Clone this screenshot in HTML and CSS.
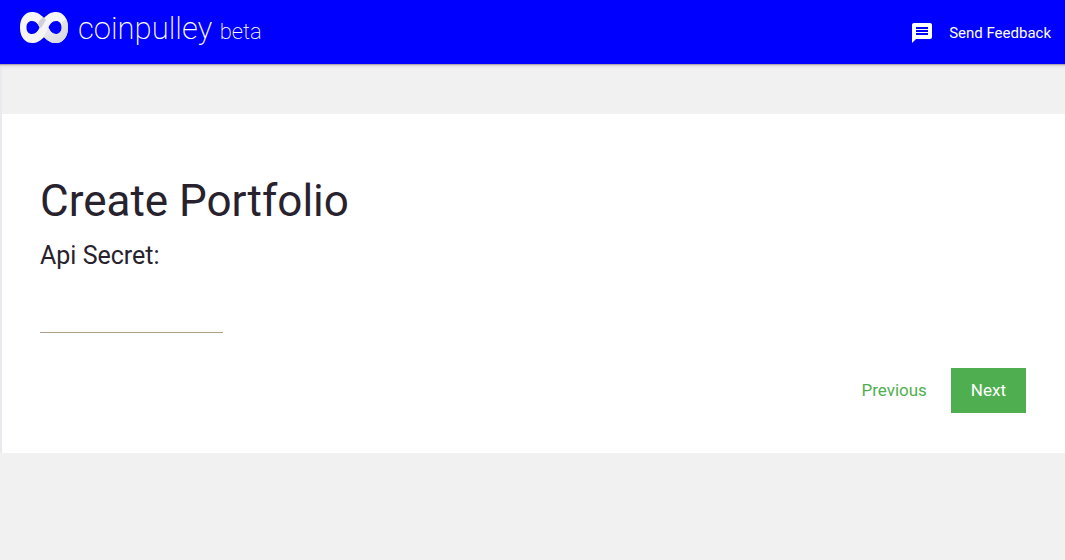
FILE: index.html
```html
<!DOCTYPE html>
<html lang="en">
<head>
<meta charset="utf-8">
<meta name="viewport" content="width=device-width, initial-scale=1">
<title>Create Portfolio - coinpulley</title>
<link rel="stylesheet" href="styles.css">
</head>
<body>
<header class="topbar">
  <a class="brand" href="#">
    <svg class="brand-mark" viewBox="0 0 48 32" aria-hidden="true">
      <defs>
        <clipPath id="loop">
          <path clip-rule="evenodd" d="M12 0C5 0 0 6 0 15.500C0 25 5 31 12 31C17 31 20 29 24 25C28 29 31 31 36 31C43 31 48 25 48 15.500C48 6 43 0 36 0C31 0 28 2 24 6C20 2 17 0 12 0ZM12 9C16 9 18 12 19.500 15.500C18 19 16 22 12 22C8.500 22 6.500 19.500 6.500 15.500C6.500 11.500 8.500 9 12 9ZM36 9C39.500 9 41.500 11.500 41.500 15.500C41.500 19.500 39.500 22 36 22C32 22 30 19 28.500 15.500C30 12 32 9 36 9Z"/>
        </clipPath>
        <linearGradient id="fade" x1="0" y1="0" x2="1" y2="1">
          <stop offset="0" stop-color="#f0f0f3"/>
          <stop offset="1" stop-color="#d4d4dc"/>
        </linearGradient>
      </defs>
      <g clip-path="url(#loop)">
        <path fill="#f5f5f5" d="M0 0H48V32H0Z"/>
        <path fill="#cfcfd9" d="M19 9L23 5L26 8L21 16L18 13Z"/>
        <path fill="url(#fade)" d="M48 6V32H28L23 26L29 15L36 22L42 17L42 10Z"/>
      </g>
    </svg>
    <span class="brand-name">coinpulley <span class="brand-stage">beta</span></span>
  </a>
  <button class="feedback" type="button">
    <svg class="feedback-icon" viewBox="0 0 24 24" aria-hidden="true"><path fill="currentColor" d="M20 2H4c-1.100 0-1.990.9-1.990 2L2 22l4-4h14c1.100 0 2-.9 2-2V4c0-1.100-.9-2-2-2zM18 14H6v-2h12v2zm0-3H6V9h12v2zm0-3H6V6h12v2z"/></svg>
    <span>Send Feedback</span>
  </button>
</header>
<main class="page">
  <form class="panel">
    <h1 class="title">Create Portfolio</h1>
    <label class="label" for="secret">Api Secret:</label>
    <input class="field" id="secret" type="text" autocomplete="off">
    <div class="actions">
      <button class="button" type="button">Previous</button>
      <button class="button button-primary" type="submit">Next</button>
    </div>
  </form>
</main>
</body>
</html>
```
FILE: styles.css
```css
* { box-sizing: border-box; }

body {
  min-height: 100vh;
  margin: 0;
  background: #f1f1f1;
  color: #27222d;
  font-family: Roboto, "Liberation Sans", sans-serif;
}

button { border: 0; background: none; font: inherit; }

.topbar {
  position: relative;
  z-index: 1;
  display: flex;
  justify-content: space-between;
  height: 64px;
  padding: 0 14px 0 20px;
  background: #0000ff;
  box-shadow: 0 1px 0 #b0a9ab, 0 2px 0 #d4d2dc, 0 4px 2px #e6e6ea;
  color: #fff;
}

.brand {
  display: flex;
  align-items: center;
  gap: 10px;
  height: 56px;
  color: inherit;
  text-decoration: none;
}

.brand-mark { width: 48px; height: 32px; }
.brand-name { font-size: 31px; font-weight: 200; }
.brand-stage { font-size: 22px; }

.feedback {
  display: flex;
  align-items: center;
  gap: 15px;
  padding: 1px 0 0;
  color: inherit;
  font-size: 15px;
}

.feedback-icon { width: 24px; height: 24px; }

.page { padding-top: 50px; border-left: 2px solid #e9e9ee; }

.panel {
  display: flex;
  flex-direction: column;
  align-items: flex-start;
  padding: 60px 39px 40px 38px;
  background: #fff;
}

.title { margin: 0; font-size: 44px; font-weight: 400; line-height: 54px; }
.label { margin-top: 12px; font-size: 25px; line-height: 32px; }

.field {
  width: 183px;
  height: 32px;
  margin-top: 29px;
  padding: 0;
  border: 0;
  border-bottom: 1px solid #b09f88;
  outline: 0;
  background: transparent;
  color: inherit;
  font: inherit;
}

.actions {
  display: flex;
  align-self: flex-end;
  gap: 4px;
  margin-top: 35px;
}

.button {
  height: 45px;
  padding: 0 20px 2px;
  color: #4faf50;
  font-size: 17px;
}

.button-primary { background: #4faf50; color: #fff; }
```
